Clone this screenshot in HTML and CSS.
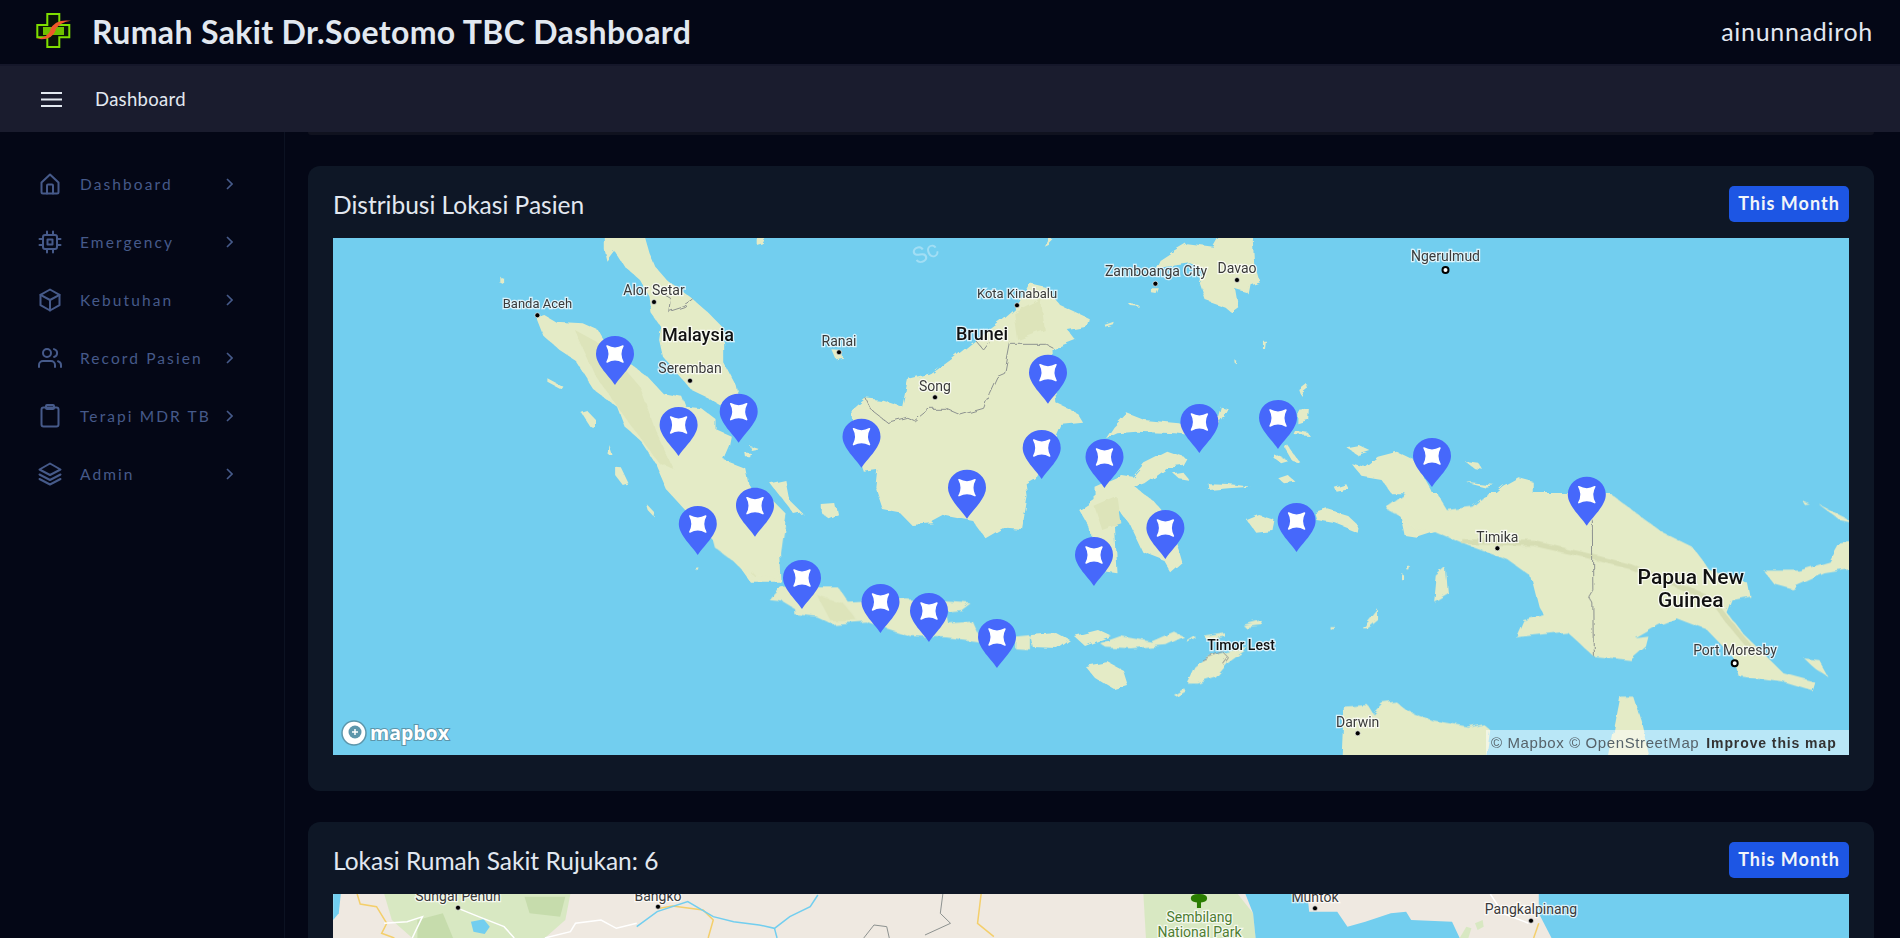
FILE: index.html
```html
<!DOCTYPE html>
<html lang="id">

<head>
    <meta charset="UTF-8">
    <meta name="viewport" content="width=device-width, initial-scale=1.0">
    <title>Rumah Sakit Dr.Soetomo TBC Dashboard</title>
    <link rel="stylesheet" href="styles.css">
</head>

<body>
    <header class="topbar">
        <svg class="logo" viewBox="0 0 36 36" width="36" height="36">
            <path class="logo-cross" d="M12.3 .9h12v11h10v12.4h-10v9.700h-12v-9.700h-10v-12.400h10z" />
            <path class="logo-fill" d="M8 14h21v8h-21z" />
            <path class="logo-swoosh" d="M15 16.700Q20 5.700 36 7.700Q25 9 20 16.700zM21 16.700Q16.700 28.300 1.700 25.700Q13.300 24.300 15.700 16.700z" />
        </svg>
        <h1 class="brand">Rumah Sakit Dr.Soetomo TBC Dashboard</h1>
        <span class="username">ainunnadiroh</span>
    </header>

    <div class="toolbar">
        <svg class="burger" viewBox="0 0 21 15" width="21" height="15">
            <path d="M0 1h21M0 7.500h21M0 14h21" />
        </svg>
        <span class="toolbar-title">Dashboard</span>
    </div>

    <div class="layout">
        <nav class="sidebar">
            <a class="nav-item" href="#">
                <svg class="nav-icon" viewBox="0 0 24 24"><path d="M3.500 10.500L12 2.500l8.500 8V20a1.500 1.500 0 0 1-1.500 1.500H5A1.500 1.500 0 0 1 3.500 20z" /><path d="M9 21.500V13.500a1 1 0 0 1 1-1h4a1 1 0 0 1 1 1v8" /></svg>
                <span class="nav-label">Dashboard</span>
                <svg class="nav-arrow" viewBox="0 0 7 12"><path d="M1 1l5 5-5 5" /></svg>
            </a>
            <a class="nav-item" href="#">
                <svg class="nav-icon" viewBox="0 0 24 24"><rect x="5" y="5" width="14" height="14" rx="2" /><rect x="9.500" y="9.500" width="5" height="5" /><path d="M9 1.500V5M15 1.500V5M9 19v3.500M15 19v3.500M1.500 9H5M1.500 15H5M19 9h3.500M19 15h3.500" /></svg>
                <span class="nav-label">Emergency</span>
                <svg class="nav-arrow" viewBox="0 0 7 12"><path d="M1 1l5 5-5 5" /></svg>
            </a>
            <a class="nav-item" href="#">
                <svg class="nav-icon" viewBox="0 0 24 24"><path d="M12 1.500l9.500 5.300v10.400L12 22.500l-9.500-5.300V6.800z" /><path d="M2.500 6.800L12 12l9.500-5.200M12 12v10.500" /></svg>
                <span class="nav-label">Kebutuhan</span>
                <svg class="nav-arrow" viewBox="0 0 7 12"><path d="M1 1l5 5-5 5" /></svg>
            </a>
            <a class="nav-item" href="#">
                <svg class="nav-icon" viewBox="0 0 24 24"><circle cx="9" cy="7" r="4" /><path d="M1 21v-2a4 4 0 0 1 4-4h8a4 4 0 0 1 4 4v2" /><path d="M16 3.100a4 4 0 0 1 0 7.800" /><path d="M23 21v-2a4 4 0 0 0-3-3.800" /></svg>
                <span class="nav-label">Record Pasien</span>
                <svg class="nav-arrow" viewBox="0 0 7 12"><path d="M1 1l5 5-5 5" /></svg>
            </a>
            <a class="nav-item" href="#">
                <svg class="nav-icon" viewBox="0 0 24 24"><rect x="3.500" y="3.500" width="17" height="19" rx="2" /><rect x="8" y="1" width="8" height="4" rx="1" /></svg>
                <span class="nav-label">Terapi MDR TB</span>
                <svg class="nav-arrow" viewBox="0 0 7 12"><path d="M1 1l5 5-5 5" /></svg>
            </a>
            <a class="nav-item" href="#">
                <svg class="nav-icon" viewBox="0 0 24 24"><path d="M12 1.500L1.500 7.500l10.500 5.500 10.500-5.500z" /><path d="M1.500 12.500l10.500 5.500 10.500-5.500" /><path d="M1.500 17l10.500 5.500L22.500 17" /></svg>
                <span class="nav-label">Admin</span>
                <svg class="nav-arrow" viewBox="0 0 7 12"><path d="M1 1l5 5-5 5" /></svg>
            </a>
        </nav>

        <main class="content">
            <div class="toolbar-edge"></div>

            <section class="card">
                <div class="card-head">
                    <h2 class="card-title">Distribusi Lokasi Pasien</h2>
                    <button class="btn-period">This Month</button>
                </div>
                <div class="map map-patients">
                    <svg class="map-svg" viewBox="0 0 1516 517" width="1516" height="517">
                        <defs>
                            <filter id="rough" filterUnits="userSpaceOnUse" x="0" y="0" width="1516" height="517">
                                <feTurbulence type="fractalNoise" baseFrequency="0.07" numOctaves="3" seed="4" />
                                <feDisplacementMap in="SourceGraphic" scale="7" />
                            </filter>
                            <g id="pin">
                                <path class="pin-body" d="M0 -1C-5 -9 -19 -21 -19 -32C-19 -43 -10 -50 0 -50C10 -50 19 -43 19 -32C19 -21 5 -9 0 -1Z" />
                                <path class="pin-star" d="M-8 -40Q0 -35.500 8 -40Q3.500 -32 8 -24Q0 -28.500 -8 -24Q-3.500 -32 -8 -40Z" />
                            </g>
                        </defs>

                        <g filter="url(#rough)">
                            <!-- sumatra, semenanjung -->
                            <g transform="translate(-3 -8) scale(.3827 .3333)">
                                <polygon class="land" points="718,10 820,10 835,70 850,110 880,150 945,205 990,250 1020,285 1030,340 1030,400 1060,465 1065,490 1020,525 990,505 945,480 900,420 870,380 860,330 865,290 840,250 835,200 810,150 770,110 745,65 725,95 718,60" />
                                <polygon class="land" points="540,262 560,255 590,275 660,280 700,300 720,340 800,415 830,440 870,490 920,500 930,530 970,535 1010,570 1010,600 1050,620 1045,650 1030,690 1085,715 1095,770 1130,780 1190,850 1175,950 1180,1058 1100,1058 1040,960 1000,930 880,780 850,700 810,630 770,590 750,530 690,480 640,390 600,360 560,320" />
                                <polygon class="land" points="1150,760 1190,750 1200,810 1235,850 1215,855 1170,790" />
                                <polygon class="land" points="1285,825 1320,822 1325,850 1300,862 1285,850" />
                                <polygon class="land" points="445,140 455,145 455,165 445,160" />
                                <polygon class="land" points="568,445 610,470 605,478 568,455" />
                                <polygon class="land" points="655,545 670,540 695,570 695,600 680,590" />
                                <polygon class="land" points="745,710 760,712 780,760 765,765 745,735" />
                                <polygon class="land" points="825,820 850,850 848,862 830,840" />
                                <polygon class="land" points="730,645 738,675 728,675" />
                                <polygon class="land" points="1310,358 1335,360 1338,380 1320,385" />
                                <polygon class="land" points="1115,10 1148,10 1130,40 1115,45" />
                                <polygon class="land" points="1095,645 1120,655 1100,660" />
                                <polygon class="land" points="1085,668 1100,668 1098,682 1087,682" />
                                <polygon class="land" points="1365,540 1400,505 1440,510 1495,530 1510,450 1575,432 1575,880 1520,885 1490,850 1445,840 1425,770 1430,720 1395,725 1370,640" />
                                <polygon class="relief" points="640,300 720,350 810,470 850,600 900,720 860,700 770,560 690,430" />
                                <polygon class="relief" points="1000,920 1100,950 1110,1040 1060,1000" />
                                <polyline class="border" points="875,195 890,205 885,245 925,230 950,210" />
                                <polyline class="border" points="1400,505 1415,540 1460,580 1510,565 1530,575 1568,540" />
                            </g>

                            <!-- kalimantan, sulawesi, maluku, papua barat -->
                            <g transform="translate(597 -8) scale(.3827 .3333)">
                                <polygon class="land" points="0,435 60,385 120,330 190,270 225,235 260,160 300,170 340,225 415,265 410,290 360,300 380,330 335,350 320,360 330,520 385,550 400,578 340,585 320,640 280,740 250,760 255,800 240,900 190,895 145,925 110,870 40,855 0,880" />
                                <polygon class="land" points="460,625 480,590 515,550 560,570 650,580 680,590 750,570 760,530 778,535 760,570 720,620 640,610 540,605 490,610" />
                                <polygon class="land" points="430,770 500,735 530,740 560,700 620,665 670,685 660,705 620,710 560,760 535,770 590,820 620,860 650,960 660,1000 630,1030 610,990 555,965 520,880 480,820 490,1030 430,1020 420,900 390,840 430,810" />
                                <polygon class="land" points="955,600 985,605 990,615 950,612" />
                                <polygon class="land" points="930,640 965,695 945,690 925,650" />
                                <polygon class="land" points="895,670 935,690 915,697 895,680" />
                                <polygon class="land" points="965,480 985,462 988,480 970,497" />
                                <polygon class="land" points="960,540 990,535 988,570 960,580" />
                                <polygon class="land" points="640,60 670,40 740,50 760,10 845,10 850,110 860,150 835,160 830,190 800,180 808,235 790,250 770,230 720,210 705,160 720,120 680,100 590,115 600,90" />
                                <polygon class="land" points="580,175 598,175 592,192 580,190" />
                                <polygon class="land" points="300,50 320,10 340,10 310,45" />
                                <polygon class="land" points="520,222 545,225 545,230 525,228" />
                                <polygon class="land" points="455,285 480,275 478,283 458,290" />
                                <polygon class="land" points="870,332 878,332 875,360 870,358" />
                                <polygon class="land" points="795,388 803,395 802,403 796,398" />
                                <polygon class="land" points="1100,700 1135,710 1170,680 1220,665 1265,690 1310,780 1340,860 1400,880 1460,810 1500,770 1540,745 1575,755 1575,1000 1440,940 1380,930 1325,900 1270,920 1240,915 1230,860 1195,830 1240,815 1300,800 1260,790 1205,790 1180,750 1130,740" />
                                <polygon class="land" points="1005,850 1040,838 1090,855 1118,885 1115,905 1060,880 1010,870" />
                                <polygon class="land" points="828,870 860,855 900,870 895,900 850,905" />
                                <polygon class="land" points="910,745 935,735 955,755 925,760" />
                                <polygon class="land" points="728,760 780,762 838,770 780,775 730,780" />
                                <polygon class="land" points="1055,770 1085,760 1092,775 1060,782" />
                                <polygon class="land" points="1088,652 1120,645 1148,660 1115,672" />
                                <polygon class="land" points="1395,690 1430,695 1448,722 1425,718" />
                                <polygon class="land" points="1400,755 1478,765 1450,770" />
                                <polygon class="land" points="635,730 660,725 678,750 650,745" />
                                <polygon class="relief" points="220,250 290,210 300,300 230,330" />
                                <polygon class="relief" points="430,830 490,800 500,880 450,900" />
                                <polyline class="border" points="0,535 40,535 80,555 140,535 155,490 175,440 195,430 210,340 300,340 320,352" />
                                <polyline class="border" points="118,330 140,360 155,338" />
                            </g>

                            <!-- jawa, bali, nusa tenggara -->
                            <g transform="translate(-3 282) scale(.4464 .3333)">
                                <polygon class="land" points="860,80 905,125 945,178 950,160 1005,172 1008,100 1015,30 1020,-20 840,-20" />
                                <polygon class="land" points="985,240 1012,200 1100,205 1140,205 1160,245 1290,235 1435,250 1415,270 1380,275 1385,310 1440,305 1455,350 1455,365 1380,352 1300,348 1200,305 1125,312 1090,290 1040,282 1040,265 1015,245" />
                                <polygon class="land" points="1535,350 1568,345 1568,388 1535,385" />
                                <polygon class="land" points="818,140 828,145 826,150 818,148" />
                                <polygon class="relief" points="1090,225 1150,250 1180,300 1120,300" />
                            </g>
                            <polygon class="land" points="697,396 722,394 737,402 725,411 700,410" />
                            <polygon class="land" points="741,398 765,392 778,398 752,408" />
                            <polygon class="land" points="752,428 775,424 790,432 795,448 782,452 762,440" />

                            <!-- papua, timor, australia -->
                            <g transform="translate(767 262) scale(.5102 .3333)">
                                <polygon class="land" points="560,25 600,-20 660,-20 680,30 730,20 760,-20 1000,-20 1060,50 1100,95 1160,140 1195,210 1270,250 1275,290 1240,300 1230,340 1260,400 1340,520 1400,545 1395,570 1340,545 1250,525 1240,470 1190,390 1130,355 1095,375 1050,415 1075,410 1070,440 1040,480 967,468 915,395 815,412 830,360 870,345 860,320 845,230 800,180 710,130 650,90 610,80 590,50" />
                                <polygon class="land" points="1300,212 1370,212 1430,185 1450,130 1480,125 1480,205 1420,220 1355,265 1320,250" />
                                <polygon class="land" points="1375,0 1390,10 1380,12" />
                                <polygon class="land" points="1410,15 1480,70 1450,60" />
                                <polygon class="land" points="1380,475 1410,480 1430,535 1405,510" />
                                <polygon class="land" points="170,548 185,500 210,470 290,440 250,485 225,530 190,548" />
                                <polygon class="land" points="0,430 40,408 100,425 145,395 165,410 130,435 60,445 10,440" />
                                <polygon class="land" points="170,420 185,405 185,415 170,425" />
                                <polygon class="land" points="205,410 245,400 245,410 210,420" />
                                <polygon class="land" points="280,375 315,360 318,375 285,382" />
                                <polygon class="land" points="145,585 165,565 168,575 150,590" />
                                <polygon class="land" points="515,385 545,328 545,360 525,385" />
                                <polygon class="land" points="655,305 660,230 678,205 682,280" />
                                <polygon class="land" points="590,220 594,222 594,240 590,238" />
                                <polygon class="land" points="605,200 610,203 608,215 604,213" />
                                <polygon class="land" points="450,378 460,378 458,388 450,386" />
                                <polygon class="land" points="473,790 478,620 525,615 535,640 553,610 580,605 600,630 650,660 720,680 750,670 765,690 755,790" />
                                <polygon class="land" points="995,790 1020,590 1045,590 1060,660 1080,790" />
                                <polyline class="ridge" points="710,125 850,130 950,165 1040,200 1130,255 1200,300 1240,380 1290,470" />
                                <polyline class="border" points="965,60 966,270 958,290 966,310 967,468" />
                                <polyline class="border" points="200,480 215,470 240,455 250,470 240,490" />
                            </g>
                        </g>

                        <text class="water-label" transform="translate(584 27) rotate(-25)">Sc</text>

                        <!-- titik kota -->
                        <g class="city-dots">
                            <circle cx="204.400" cy="77.300" r="2.500" />
                            <circle cx="321" cy="64" r="2.500" />
                            <circle cx="357" cy="142.700" r="2.500" />
                            <circle cx="506" cy="114.300" r="2.500" />
                            <circle cx="602" cy="159.300" r="2.500" />
                            <circle cx="684" cy="67.300" r="2.500" />
                            <circle cx="822.400" cy="45.700" r="2.500" />
                            <circle cx="904" cy="42" r="2.500" />
                            <circle cx="1164.400" cy="310.300" r="2.500" />
                            <circle cx="1024.700" cy="495.300" r="2.500" />
                            <circle class="capital" cx="1112.500" cy="32" r="3" />
                            <circle class="capital" cx="1401.700" cy="425.300" r="3" />
                        </g>

                        <g class="places">
                            <text class="place-small" x="204.400" y="70">Banda Aceh</text>
                            <text x="321" y="57">Alor Setar</text>
                            <text x="357" y="135">Seremban</text>
                            <text x="506" y="108">Ranai</text>
                            <text x="602" y="153">Song</text>
                            <text class="place-small" x="684" y="60">Kota Kinabalu</text>
                            <text x="823" y="38">Zamboanga City</text>
                            <text x="904" y="35">Davao</text>
                            <text x="1112.500" y="23">Ngerulmud</text>
                            <text x="1164.400" y="304">Timika</text>
                            <text x="1402" y="417">Port Moresby</text>
                            <text x="1024.700" y="489">Darwin</text>
                            <text class="place-strong" x="908" y="412">Timor Lest</text>
                            <text class="country" x="649" y="102">Brunei</text>
                            <text class="country" x="365" y="103">Malaysia</text>
                            <text class="country-big" x="1357.800" y="346">Papua New</text>
                            <text class="country-big" x="1357.800" y="369">Guinea</text>
                        </g>

                        <!-- pin pasien -->
                        <use href="#pin" x="282" y="148" />
                        <use href="#pin" x="345.600" y="219" />
                        <use href="#pin" x="405.700" y="205.700" />
                        <use href="#pin" x="528.500" y="230.700" />
                        <use href="#pin" x="364.800" y="318" />
                        <use href="#pin" x="422" y="299.700" />
                        <use href="#pin" x="469" y="372" />
                        <use href="#pin" x="547.500" y="396" />
                        <use href="#pin" x="596" y="405" />
                        <use href="#pin" x="664" y="431" />
                        <use href="#pin" x="715" y="166.700" />
                        <use href="#pin" x="708.700" y="242" />
                        <use href="#pin" x="634" y="281.700" />
                        <use href="#pin" x="771.500" y="251" />
                        <use href="#pin" x="866.400" y="216" />
                        <use href="#pin" x="945" y="212" />
                        <use href="#pin" x="1099" y="250" />
                        <use href="#pin" x="832.400" y="322" />
                        <use href="#pin" x="963.600" y="315" />
                        <use href="#pin" x="761" y="349" />
                        <use href="#pin" x="1253.800" y="288.700" />
                    </svg>

                    <div class="mapbox-logo">
                        <svg viewBox="0 0 26 26" width="26" height="26">
                            <circle class="logo-ring" cx="13" cy="13" r="12" />
                            <circle class="logo-dot" cx="14" cy="12" r="6.500" />
                            <path class="logo-plus" d="M14 9v6M11 12h6" />
                        </svg>
                        <span class="mapbox-word">mapbox</span>
                    </div>
                    <div class="attrib">
                        <span>© Mapbox © OpenStreetMap</span>
                        <strong>Improve this map</strong>
                    </div>
                </div>
            </section>

            <section class="card">
                <div class="card-head">
                    <h2 class="card-title">Lokasi Rumah Sakit Rujukan: 6</h2>
                    <button class="btn-period">This Month</button>
                </div>
                <div class="map map-hospitals">
                    <svg class="map-svg" viewBox="0 0 1516 517" width="1516" height="517">
                        <g transform="translate(-33 -114) scale(.5102 .3333)">
                            <polygon class="sea" points="65,342 80,342 76,400 65,420" />
                            <polygon class="park" points="165,342 530,342 520,420 480,474 220,474 180,420" />
                            <polygon class="park-dark" points="230,420 280,400 300,474 230,474" />
                            <polygon class="park-dark" points="440,350 520,350 510,410 450,400" />
                            <polygon class="sea" points="335,425 360,418 372,440 362,462 340,455" />
                            <polyline class="road" points="112,342 118,372 150,380 170,430 160,460 185,474" />
                            <polyline class="road" points="705,385 730,378 790,390 810,420 800,474" />
                            <polyline class="road" points="1335,342 1328,430 1360,470" />
                            <polyline class="street" points="165,430 210,425 240,410 220,474" />
                            <polyline class="street" points="310,385 350,410 400,440 420,474" />
                            <polyline class="street" points="480,474 530,455 540,430 590,420 620,445 660,430" />
                            <polyline class="river" points="660,440 700,395 760,365 810,410 850,425 900,435 930,445 960,410 1000,380 1015,345" />
                            <polyline class="river" points="930,445 935,474" />
                            <polyline class="border" points="1260,342 1255,400 1275,430 1225,465" />
                            <polyline class="border" points="1105,474 1125,435 1150,440 1155,474" />
                        </g>
                        <g transform="translate(767 -114) scale(.5102 .3333)">
                            <polygon class="sea" points="860,342 1468,342 1468,474 885,474 860,400" />
                            <polygon class="park" points="85,342 270,342 300,400 305,474 90,474" />
                            <polygon class="sea" points="285,342 375,342 408,365 410,395 465,395 485,440 520,425 570,400 600,395 610,420 690,425 705,474 305,474 300,400" />
                            <polygon class="park" points="705,474 718,440 728,445 722,474" />
                            <polygon class="park" points="735,430 750,420 752,440 740,450" />
                            <polyline class="street" points="765,342 790,400 840,430" />
                            <polyline class="road" points="860,430 850,474" />
                            <path class="tree" d="M190 362h8v22h-8zM178 355q0-13 16-13q16 0 16 13q0 13-16 13q-16 0-16-13z" />
                        </g>
                        <g class="city-dots">
                            <circle cx="125" cy="13.700" r="2.500" />
                            <circle cx="325" cy="12.700" r="2.500" />
                            <circle cx="982" cy="14.300" r="2.500" />
                            <circle cx="1198" cy="26.700" r="2.500" />
                        </g>
                        <g class="places">
                            <text x="125" y="7">Sungai Penuh</text>
                            <text x="325" y="7">Bangko</text>
                            <text x="982" y="8">Muntok</text>
                            <text x="1198" y="20">Pangkalpinang</text>
                            <text class="place-park" x="866.500" y="28">Sembilang</text>
                            <text class="place-park" x="866.500" y="43">National Park</text>
                        </g>
                    </svg>
                </div>
            </section>
        </main>
    </div>
</body>

</html>
```
FILE: styles.css
```css
* {
    box-sizing: border-box;
}

html,
body {
    height: 100%;
}

body {
    margin: 0;
    background-color: #040716;
    color: #e2e8f0;
    font-family: 'Lato', 'Open Sans', sans-serif;
    display: flex;
    flex-direction: column;
    overflow: hidden;
}

/* barra atas */
.topbar {
    flex: none;
    display: flex;
    align-items: center;
    height: 66px;
    padding: 0 27px 2px 35px;
    background-color: #040716;
    border-bottom: 2px solid #15172a;
}

.logo {
    flex: none;
    margin-right: 21px;
}

.logo-fill {
    fill: #6ec000;
}

.logo-cross {
    fill: #0a1408;
    stroke: #7fdf00;
    stroke-width: 2;
}

.logo-swoosh {
    fill: #f0592a;
}

.brand {
    margin: 0;
    font-size: 32px;
    font-weight: 700;
    letter-spacing: 0.350px;
    white-space: nowrap;
}

.username {
    margin-left: auto;
    font-size: 25px;
    letter-spacing: 0.700px;
}

.toolbar {
    flex: none;
    display: flex;
    align-items: center;
    height: 66px;
    padding-left: 41px;
    background-color: #1a1c2e;
}

.burger {
    margin-right: 33px;
    fill: none;
    stroke: #e2e8f0;
    stroke-width: 2;
}

.toolbar-title {
    font-size: 18.500px;
    letter-spacing: 0.300px;
}

/* layout */
.layout {
    flex: 1;
    display: flex;
    min-height: 0;
}

.sidebar {
    flex: none;
    width: 285px;
    padding-top: 23px;
    border-right: 1px solid #0c1222;
}

.nav-item {
    display: flex;
    align-items: center;
    height: 58px;
    padding-left: 38px;
    color: #465a8a;
    text-decoration: none;
}

.nav-icon {
    flex: none;
    width: 24px;
    height: 24px;
    fill: none;
    stroke: currentColor;
    stroke-width: 2;
    stroke-linecap: round;
    stroke-linejoin: round;
}

.nav-label {
    flex: none;
    width: 146px;
    margin-left: 18px;
    font-size: 15.500px;
    letter-spacing: 2.100px;
    white-space: nowrap;
}

.nav-arrow {
    flex: none;
    width: 7px;
    height: 12px;
    fill: none;
    stroke: currentColor;
    stroke-width: 1.600;
}

.content {
    flex: 1;
    min-width: 0;
    padding: 0 26px 0 23px;
    overflow: hidden;
}

.toolbar-edge {
    height: 3px;
    margin-bottom: 31px;
    background-color: #10121f;
    border-radius: 0 0 6px 6px;
}

/* kartu */
.card {
    margin-bottom: 31px;
    padding: 20px 25px 36px;
    background-color: #0e1726;
    border-radius: 12px;
}

.card-head {
    display: flex;
    align-items: center;
    justify-content: space-between;
    height: 36px;
    margin-bottom: 16px;
}

.card-title {
    margin: 0;
    font-size: 24.500px;
    font-weight: 400;
}

.btn-period {
    width: 120px;
    height: 36px;
    padding: 0 0 2px;
    border: none;
    border-radius: 5px;
    background-color: #1d56e4;
    color: #f1f5f9;
    font-family: inherit;
    font-size: 18px;
    font-weight: 700;
    letter-spacing: 1px;
}

/* peta */
.map {
    position: relative;
    height: 517px;
    overflow: hidden;
}

.map-patients {
    background-color: #72ceef;
}

.map-hospitals {
    background-color: #efe9e1;
}

.map-svg {
    display: block;
}

.land {
    fill: #e4ebc6;
}

.relief {
    fill: #dde4ba;
}

.ridge {
    fill: none;
    stroke: #d6ddb3;
    stroke-width: 5;
    vector-effect: non-scaling-stroke;
}

.border {
    fill: none;
    stroke: #8d9290;
    stroke-width: 1;
    vector-effect: non-scaling-stroke;
}

.sea {
    fill: #72ceef;
}

.park {
    fill: #d8e8c2;
}

.park-dark {
    fill: #c6dcac;
}

.road {
    fill: none;
    stroke: #f4cf6b;
    stroke-width: 1.500;
    vector-effect: non-scaling-stroke;
}

.street {
    fill: none;
    stroke: #fff;
    stroke-width: 1.500;
    vector-effect: non-scaling-stroke;
}

.river {
    fill: none;
    stroke: #72ceef;
    stroke-width: 1.500;
    vector-effect: non-scaling-stroke;
}

.tree {
    fill: #2a7d00;
}

.water-label {
    fill: #a2def4;
    font-family: 'Roboto', sans-serif;
    font-size: 23px;
}

.city-dots circle {
    fill: #000;
    stroke: #fff;
    stroke-opacity: 0.6;
    stroke-width: 1;
}

.city-dots .capital {
    fill: #fff;
    stroke: #000;
    stroke-opacity: 1;
    stroke-width: 2;
}

.places text {
    fill: #3a3a3a;
    font-family: 'Roboto', sans-serif;
    font-size: 14px;
    text-anchor: middle;
    stroke: #fff;
    stroke-opacity: 0.75;
    stroke-width: 2.500px;
    paint-order: stroke;
}

.places .place-small {
    font-size: 13px;
}

.places .place-strong {
    fill: #111;
    font-size: 14px;
    font-weight: 500;
}

.places .country {
    fill: #111;
    font-size: 18px;
    font-weight: 500;
}

.places .country-big {
    fill: #111;
    font-size: 21px;
    font-weight: 500;
}

.places .place-park {
    fill: #4e7d32;
    font-size: 14px;
}

.pin-body {
    fill: #4668fb;
}

.pin-star {
    fill: #fff;
    stroke: #fff;
    stroke-width: 1.500;
    stroke-linejoin: round;
}

.mapbox-logo {
    position: absolute;
    left: 8px;
    bottom: 9px;
    display: flex;
    align-items: center;
    gap: 3px;
}

.logo-ring {
    fill: #fff;
    stroke: #5d96ab;
    stroke-width: 1.500;
}

.logo-dot {
    fill: #5d96ab;
}

.logo-plus {
    fill: none;
    stroke: #fff;
    stroke-width: 1.500;
}

.mapbox-word {
    color: #fff;
    font-family: 'Open Sans', sans-serif;
    font-size: 19.500px;
    font-weight: 700;
    line-height: 26px;
    -webkit-text-stroke: 2px #5d96ab;
    paint-order: stroke fill;
}

.attrib {
    position: absolute;
    right: 0;
    bottom: 0;
    display: flex;
    align-items: center;
    gap: 7px;
    width: 363px;
    height: 25px;
    padding-left: 5px;
    background-color: rgba(255, 255, 255, 0.5);
    color: #57636a;
    font-family: 'Liberation Sans', Arial, sans-serif;
    font-size: 15px;
    letter-spacing: 0.600px;
    white-space: nowrap;
}

.attrib strong {
    font-size: 14px;
    letter-spacing: 0.900px;
    color: #333;
}
```
